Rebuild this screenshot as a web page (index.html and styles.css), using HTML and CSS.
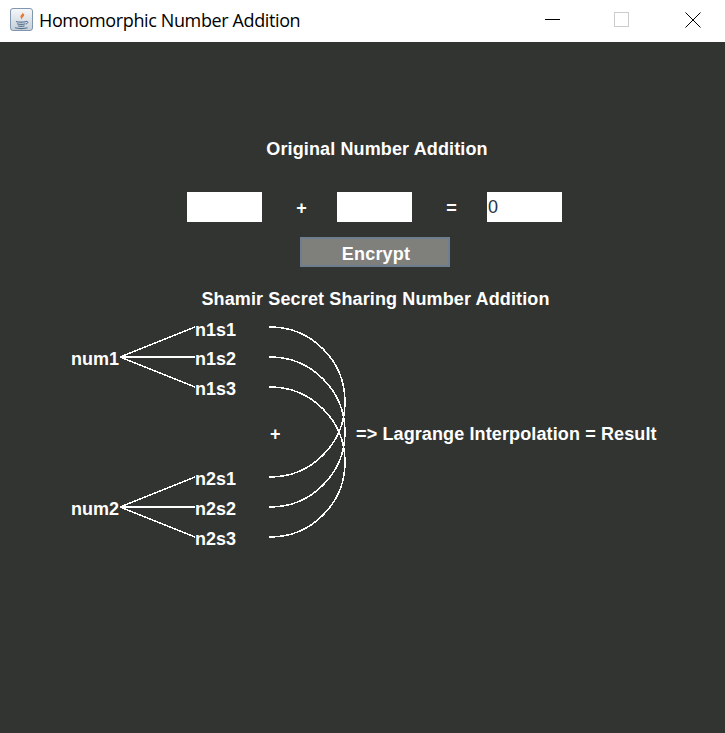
FILE: index.html
```html
<!DOCTYPE html>
<html lang="en">
<head>
<meta charset="utf-8">
<title>Homomorphic Number Addition</title>
<link rel="stylesheet" href="styles.css">
</head>
<body>
<div class="window">
  <header class="titlebar">
    <svg class="app-icon" width="24" height="24" viewBox="0 0 24 24">
      <defs>
        <linearGradient id="iconbg" x1="0" y1="0" x2="0" y2="1">
          <stop offset="0" stop-color="#f6f8fa"/>
          <stop offset="1" stop-color="#c5ced8"/>
        </linearGradient>
      </defs>
      <rect x="0.5" y="0.5" width="22" height="22" rx="2.5" fill="url(#iconbg)" stroke="#8197ad"/>
      <path d="M12.500 3.500c1.500 2-2.500 3.500-2 5.500.2 1 1.200 1.700 1.500 3-.2-1.300.2-2.200 1.200-3.200 1-1 1.500-1.800.5-3.200-.2 1-.7 0-1.200-2.100z" fill="#e8792b"/>
      <path d="M6 13.500c2 .8 8 .8 10 0M7 15.700c2 .7 6.500.7 8.500 0M8 17.800c1.500.5 5 .5 6.500 0M5 19.800c3 1 9.500 1 12.500 0" fill="none" stroke="#56728f" stroke-width="1.200"/>
      <path d="M16 13.500c2-.7 3 1.500 0 2.500" fill="none" stroke="#56728f"/>
    </svg>
    <span class="title-text">Homomorphic Number Addition</span>
    <div class="controls">
      <svg width="15" height="15" viewBox="0 0 15 15"><path d="M0 6.500h15" stroke="#000" fill="none"/></svg>
      <svg width="16" height="16" viewBox="0 0 16 16"><rect x="0.500" y="0.500" width="14" height="14" fill="none" stroke="#cccccc"/></svg>
      <svg class="close-icon" width="16" height="16" viewBox="0 0 16 16"><path d="M0.500 0.500l15 15M15.500 0.500l-15 15" stroke="#000" fill="none"/></svg>
    </div>
  </header>
  <main class="panel">
    <h1 class="heading heading-original">Original Number Addition</h1>
    <div class="sum-row">
      <input class="field" type="text" value="">
      <span class="operator">+</span>
      <input class="field" type="text" value="">
      <span class="operator">=</span>
      <input class="field" type="text" value="0">
    </div>
    <div class="action-row"><button class="encrypt" type="button">Encrypt</button></div>
    <h2 class="heading heading-shamir">Shamir Secret Sharing Number Addition</h2>
    <section class="diagram">
      <svg class="wires" width="725" height="240" viewBox="0 0 725 240">
        <g fill="none" stroke="#ffffff" stroke-width="1.500" shape-rendering="crispEdges">
          <path d="M120 47L195 17M120 47L195 77"/>
          <path d="M120 197L195 167M120 197L195 227"/>
          <path d="M269 17H270A75 75 0 0 1 270 167H269"/>
          <path d="M269 47H270A75 75 0 0 1 270 197H269"/>
          <path d="M269 77H270A75 75 0 0 1 270 227H269"/>
        </g>
        <path class="wire-straight" d="M120 47H195M120 197H195" shape-rendering="crispEdges"/>
      </svg>
      <span class="node node-num1">num1</span>
      <span class="node node-n1s1">n1s1</span>
      <span class="node node-n1s2">n1s2</span>
      <span class="node node-n1s3">n1s3</span>
      <span class="node node-plus">+</span>
      <span class="node node-result">=&gt; Lagrange Interpolation = Result</span>
      <span class="node node-n2s1">n2s1</span>
      <span class="node node-num2">num2</span>
      <span class="node node-n2s2">n2s2</span>
      <span class="node node-n2s3">n2s3</span>
    </section>
  </main>
</div>
</body>
</html>
```
FILE: styles.css
```css
* { box-sizing: border-box; }
html, body { margin: 0; padding: 0; }
body { width: 725px; height: 733px; overflow: hidden; background: #323432; }
.window { display: flex; flex-direction: column; height: 733px; }

.titlebar {
  display: flex;
  align-items: center;
  height: 42px;
  flex: none;
  background: #ffffff;
  padding-left: 10px;
}
.app-icon { flex: none; margin-top: -3px; }
.title-text {
  margin-left: 5px;
  margin-top: -3px;
  font: 18px/24px "Open Sans", "Noto Sans", sans-serif;
  color: #000000;
  letter-spacing: -0.38px;
}
.controls {
  margin-left: auto;
  display: flex;
  align-items: center;
  gap: 54px;
  padding-right: 24px;
  margin-top: -2px;
}
.close-icon { margin-left: 1px; }

.panel {
  flex: 1;
  font-family: "Liberation Sans", Arial, sans-serif;
  color: #ffffff;
  font-weight: 700;
  font-size: 18px;
  letter-spacing: 0.13px;
}
.heading {
  margin: 0;
  font-size: 18px;
  line-height: 20px;
  font-weight: 700;
  text-align: center;
}
.heading-original { padding: 97px 0 0 29px; }
.sum-row {
  display: grid;
  grid-template-columns: repeat(5, 75px);
  height: 30px;
  margin: 33px 0 0 187px;
}
.field {
  width: 75px;
  height: 30px;
  border: 0;
  padding: 0 0 0 1px;
  background: #ffffff;
  color: #24364a;
  font: 18px "Liberation Sans", Arial, sans-serif;
}
.operator {
  line-height: 33px;
  text-align: center;
  font-size: 18px;
  padding-left: 4px;
}
.action-row { display: flex; margin: 15px 0 0 300px; }
.encrypt {
  width: 150px;
  height: 30px;
  background: #7f807c;
  border: 2px solid #6f7d90;
  color: #ffffff;
  font: 700 18px "Liberation Sans", Arial, sans-serif;
  letter-spacing: 0.2px;
  padding: 5px 0 0 2px;
}
.heading-shamir { margin-top: 22px; padding-left: 26px; }
.diagram { position: relative; height: 240px; margin-top: 1px; }
.wires { position: absolute; left: 0; top: 0; }
.wire-straight { fill: none; stroke: #ffffff; stroke-width: 2; }
.node { position: absolute; line-height: 20px; white-space: nowrap; letter-spacing: 0; }
.node-n1s1 { left: 195px; top: 10px; }
.node-num1 { left: 71px; top: 39px; }
.node-n1s2 { left: 195px; top: 39px; }
.node-n1s3 { left: 195px; top: 69px; }
.node-plus { left: 270px; top: 114px; }
.node-result { left: 356px; top: 114px; letter-spacing: 0.12px; }
.node-n2s1 { left: 195px; top: 159px; }
.node-num2 { left: 71px; top: 189px; }
.node-n2s2 { left: 195px; top: 189px; }
.node-n2s3 { left: 195px; top: 219px; }
```
